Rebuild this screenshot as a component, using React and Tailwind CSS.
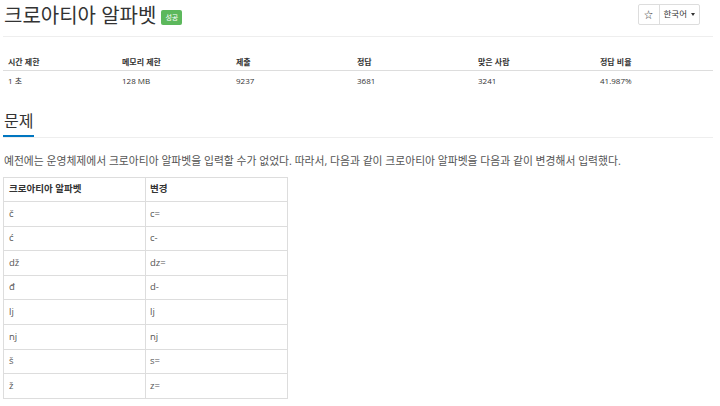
import React from 'react';

const stats = [
  { label: '시간 제한', value: '1 초', w: 'w-[114px]' },
  { label: '메모리 제한', value: '128 MB', w: 'w-[114px]' },
  { label: '제출', value: '9237', w: 'w-[121px]' },
  { label: '정답', value: '3681', w: 'w-[121px]' },
  { label: '맞은 사람', value: '3241', w: 'w-[122px]' },
  { label: '정답 비율', value: '41.987%', w: 'flex-1' },
];

const rows = [
  ['č', 'c='],
  ['ć', 'c-'],
  ['dž', 'dz='],
  ['đ', 'd-'],
  ['lj', 'lj'],
  ['nj', 'nj'],
  ['š', 's='],
  ['ž', 'z='],
];

export default function App() {
  return (
    <div className="w-[720px] h-[406px] overflow-hidden bg-white text-[#333] font-['Open_Sans','Noto_Sans_CJK_KR',sans-serif]">
      <div className="px-[3px] w-[716px]">
        {/* 제목 */}
        <div className="flex items-start justify-between h-[37px] border-b border-[#eee]">
          <div className="flex items-center pt-[4px] pl-[1px]">
            <h1 className="text-[20px] leading-[24px] font-normal text-[#333]">크로아티아 알파벳</h1>
            <span className="ml-[5px] mt-[3px] bg-[#5cb85c] text-white text-[7px] leading-[15px] px-[4px] rounded-[2px]">성공</span>
          </div>
          <div className="flex mt-[4px] mr-[13px] h-[21px] border border-[#ddd] rounded-[2px]">
            <button className="w-[21px] flex items-center justify-center border-r border-[#ddd] text-[9px]">☆</button>
            <button className="pl-[4px] pr-[4px] flex items-center gap-[4px] text-[#333] text-[8.5px]">
              한국어
              <span className="w-0 h-0 border-l-[2.5px] border-r-[2.5px] border-t-[3px] border-l-transparent border-r-transparent border-t-[#333]"></span>
            </button>
          </div>
        </div>

        {/* 통계 */}
        <div className="mt-[16px] text-[8px]">
          <div className="flex h-[18px] border-b border-[#ddd] font-bold items-center pl-[5px]">
            {stats.map((s) => (
              <div key={s.label} className={s.w}>{s.label}</div>
            ))}
          </div>
          <div className="flex h-[20px] items-center pl-[5px]">
            {stats.map((s) => (
              <div key={s.label} className={s.w}>{s.value}</div>
            ))}
          </div>
        </div>

        {/* 문제 */}
        <div className="mt-[18px] border-b border-[#eee] flex">
          <h2 className="text-[16px] leading-[24px] font-normal pb-[2px] border-b-2 border-[#0076c0] pr-[1px] pl-[1px] text-[#333]">문제</h2>
        </div>

        <p className="mt-[16px] text-[10.8px] leading-[14px] text-[#555] pl-[1px]">
          예전에는 운영체제에서 크로아티아 알파벳을 입력할 수가 없었다. 따라서, 다음과 같이 크로아티아 알파벳을 다음과 같이 변경해서 입력했다.
        </p>

        <table className="mt-[9px] w-[285px] border-collapse text-[9.5px] text-[#555]">
          <thead>
            <tr className="h-[24px]">
              <th className="border border-[#ddd] text-left font-bold text-[#333] pl-[5px] w-[142px]">크로아티아 알파벳</th>
              <th className="border border-[#ddd] text-left font-bold text-[#333] pl-[4px]">변경</th>
            </tr>
          </thead>
          <tbody>
            {rows.map(([a, b]) => (
              <tr key={a} className="h-[24.6px]">
                <td className="border border-[#ddd] pl-[5px]">{a}</td>
                <td className="border border-[#ddd] pl-[4px]">{b}</td>
              </tr>
            ))}
          </tbody>
        </table>
      </div>
    </div>
  );
}
